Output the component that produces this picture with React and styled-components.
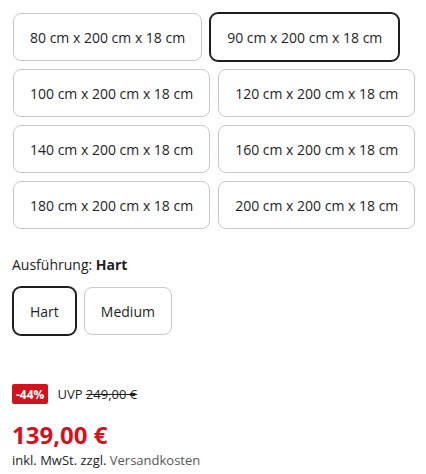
import styled, { createGlobalStyle } from "styled-components";

const GlobalStyle = createGlobalStyle`
  html, body {
    margin: 0;
    padding: 0;
    background: #fff;
  }
  body {
    font-family: "Open Sans", "Liberation Sans", sans-serif;
    color: #222;
  }
`;

const Page = styled.div`
  width: 426px;
  padding: 0 0 0 12px;
  box-sizing: border-box;
`;

const Options = styled.div`
  display: flex;
  flex-wrap: wrap;
  gap: 8px;
  padding: 13px 0 0 1px;
`;

const OptionButton = styled.button`
  height: 48px;
  padding: 0 16px;
  box-sizing: border-box;
  border: 1px solid ${(p) => (p.$active ? "#1e1e1e" : "#c9c9c9")};
  box-shadow: ${(p) => (p.$active ? "0 0 0 1px #1e1e1e" : "none")};
  border-radius: 8px;
  background: #fff;
  font-family: "Open Sans", "Liberation Sans", sans-serif;
  font-size: 14px;
  color: #1e1e1e;
  white-space: nowrap;
  cursor: pointer;
`;

const Label = styled.div`
  margin-top: 26px;
  font-size: 14px;
  line-height: 20px;
  color: #1e1e1e;
  & b {
    font-weight: 700;
  }
`;

const Variants = styled(Options)`
  padding-top: 12px;
`;

const PriceRow = styled.div`
  display: flex;
  align-items: center;
  gap: 9px;
  margin-top: 49px;
`;

const Badge = styled.span`
  display: inline-flex;
  align-items: center;
  height: 20px;
  padding: 0 4px;
  border-radius: 2px;
  background: #d3121d;
  color: #fff;
  font-size: 12px;
  font-weight: 700;
`;

const Uvp = styled.span`
  font-size: 13px;
  color: #1e1e1e;
  & s {
    text-decoration: line-through;
  }
`;

const Price = styled.div`
  margin-top: 18px;
  font-size: 24px;
  line-height: 26px;
  font-weight: 700;
  color: #d3121d;
`;

const Tax = styled.div`
  margin-top: 4px;
  font-size: 13px;
  line-height: 16px;
  color: #1e1e1e;
  & span {
    color: #555;
  }
`;

const sizes = [80, 90, 100, 120, 140, 160, 180, 200];

export default function App() {
  return (
    <Page>
      <GlobalStyle />
      <Options>
        {sizes.map((w) => (
          <OptionButton key={w} $active={w === 90}>
            {w} cm x 200 cm x 18 cm
          </OptionButton>
        ))}
      </Options>
      <Label>
        Ausführung: <b>Hart</b>
      </Label>
      <Variants>
        <OptionButton $active>Hart</OptionButton>
        <OptionButton>Medium</OptionButton>
      </Variants>
      <PriceRow>
        <Badge>-44%</Badge>
        <Uvp>
          UVP <s>249,00 €</s>
        </Uvp>
      </PriceRow>
      <Price>139,00 €</Price>
      <Tax>
        inkl. MwSt. zzgl. <span>Versandkosten</span>
      </Tax>
    </Page>
  );
}
